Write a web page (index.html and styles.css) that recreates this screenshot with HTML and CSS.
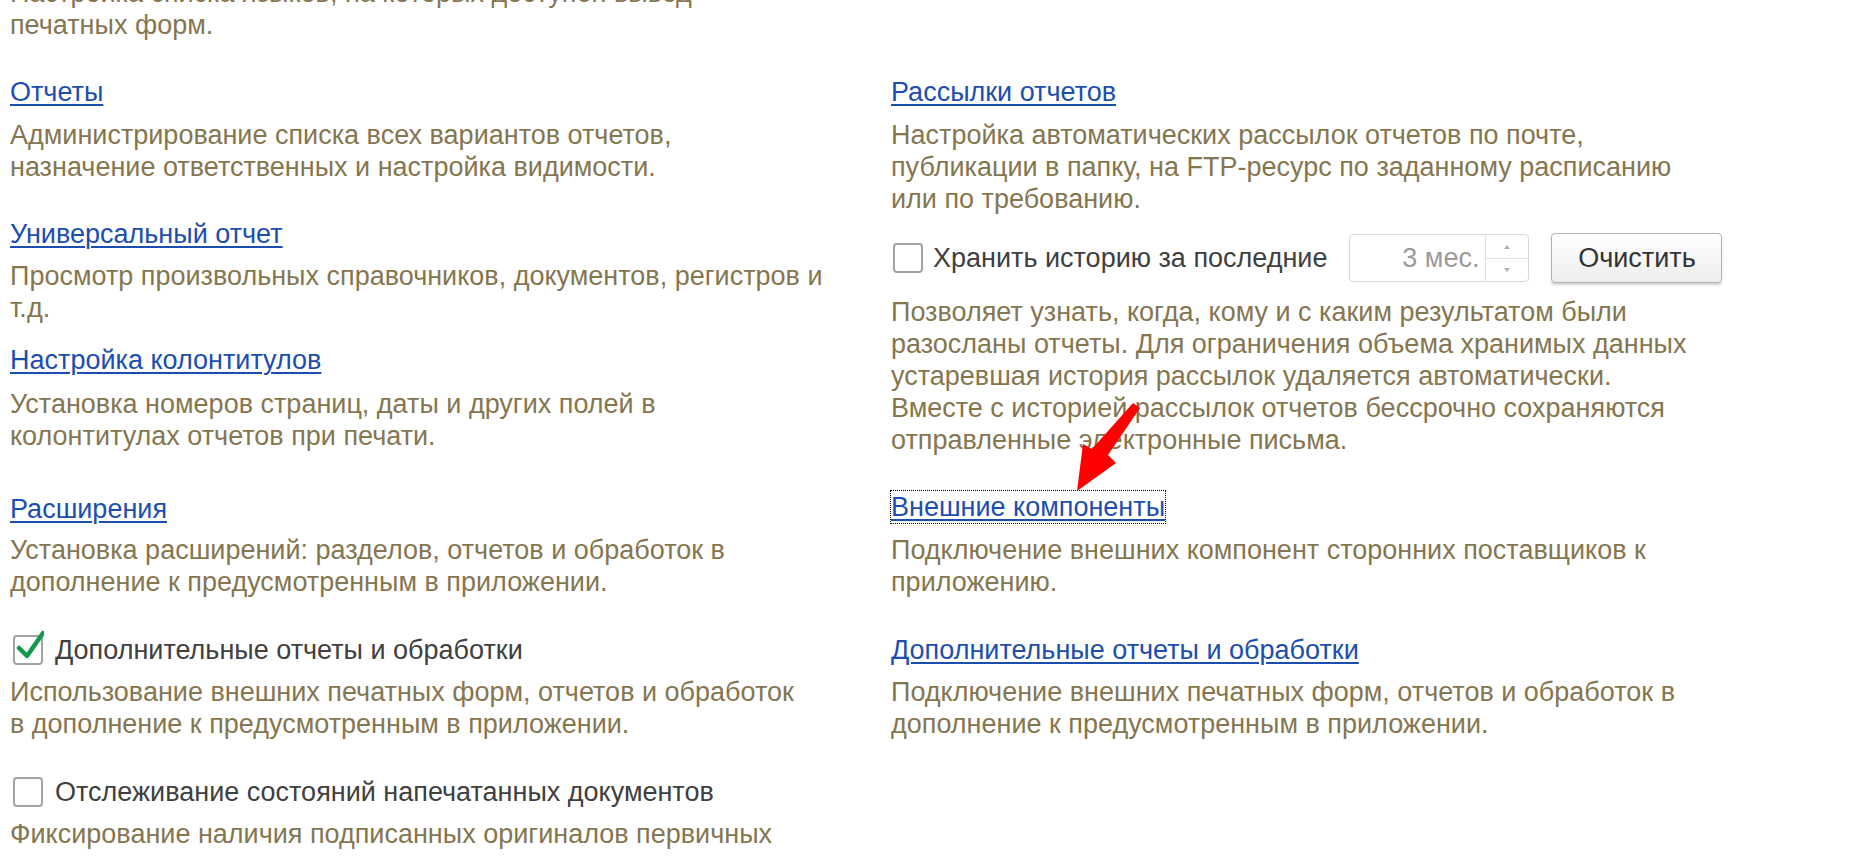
FILE: index.html
```html
<!DOCTYPE html>
<html>
<head>
    <meta charset="utf-8">
    <title>Отчеты и обработки</title>
    <link rel="stylesheet" href="styles.css">
</head>
<body>
<div class="page">
    <div class="col col-left">
        <p class="note lead">Настройка списка языков, на которых доступен вывод<br>печатных форм.</p>

        <div class="item item-reports">
            <a href="#" class="link">Отчеты</a>
            <p class="note">Администрирование списка всех вариантов отчетов,<br>назначение ответственных и настройка видимости.</p>
        </div>

        <div class="item item-universal">
            <a href="#" class="link">Универсальный отчет</a>
            <p class="note">Просмотр произвольных справочников, документов, регистров и<br>т.д.</p>
        </div>

        <div class="item item-footer">
            <a href="#" class="link">Настройка колонтитулов</a>
            <p class="note">Установка номеров страниц, даты и других полей в<br>колонтитулах отчетов при печати.</p>
        </div>

        <div class="item item-ext">
            <a href="#" class="link">Расширения</a>
            <p class="note">Установка расширений: разделов, отчетов и обработок в<br>дополнение к предусмотренным в приложении.</p>
        </div>

        <div class="item item-check">
            <label class="check">
                <span class="box checked">
                    <svg width="30" height="36" viewBox="0 0 30 36"><path d="M5 22 L13 30 L29 7" fill="none" stroke="#12994a" stroke-width="4.5" stroke-linecap="round" stroke-linejoin="round"/></svg>
                </span>
                <span class="check-text">Дополнительные отчеты и обработки</span>
            </label>
            <p class="note">Использование внешних печатных форм, отчетов и обработок<br>в дополнение к предусмотренным в приложении.</p>
        </div>

        <div class="item item-check">
            <label class="check">
                <span class="box"></span>
                <span class="check-text">Отслеживание состояний напечатанных документов</span>
            </label>
            <p class="note">Фиксирование наличия подписанных оригиналов первичных</p>
        </div>
    </div>

    <div class="col col-right">
        <div class="item item-reports">
            <a href="#" class="link">Рассылки отчетов</a>
            <p class="note">Настройка автоматических рассылок отчетов по почте,<br>публикации в папку, на FTP-ресурс по заданному расписанию<br>или по требованию.</p>
        </div>

        <div class="history">
            <label class="check">
                <span class="box"></span>
                <span class="check-text">Хранить историю за последние</span>
            </label>
            <div class="spin">
                <span class="spin-value">3 мес.</span>
                <span class="spin-btns">
                    <span class="spin-up"></span>
                    <span class="spin-down"></span>
                </span>
            </div>
            <button class="btn">Очистить</button>
        </div>
        <p class="note history-note">Позволяет узнать, когда, кому и с каким результатом были<br>разосланы отчеты. Для ограничения объема хранимых данных<br>устаревшая история рассылок удаляется автоматически.<br>Вместе с историей рассылок отчетов бессрочно сохраняются<br>отправленные электронные письма.</p>

        <div class="item item-ext">
            <a href="#" class="link focused">Внешние компоненты</a>
            <p class="note">Подключение внешних компонент сторонних поставщиков к<br>приложению.</p>
        </div>

        <div class="item item-check">
            <a href="#" class="link">Дополнительные отчеты и обработки</a>
            <p class="note">Подключение внешних печатных форм, отчетов и обработок в<br>дополнение к предусмотренным в приложении.</p>
        </div>
    </div>

    <!-- red pointer drawn over the form -->
    <svg class="arrow" width="90" height="110" viewBox="0 0 90 110">
        <path d="M67 4 L74 9 L42 56 L50 64 L11 92 L17 45 L26 50 Z" fill="#ff0000"/>
    </svg>
</div>
</body>
</html>
```

FILE: styles.css
```css
body {
    margin: 0;
    background: #fff;
    font-family: "Liberation Sans", Arial, sans-serif;
    font-size: 27px;
    line-height: 32px;
    color: #404040;
    overflow: hidden;
}

.page {
    position: relative;
    display: grid;
    grid-template-columns: 891px 1fr;
    height: 856px;
    overflow: hidden;
}

.col-left {
    padding-left: 10px;
}

p {
    margin: 0;
}

.note {
    color: #857650;
}

.lead {
    margin-top: -23px;
}

.link {
    color: #1c4eb0;
    text-decoration: underline;
    text-decoration-thickness: 2px;
    text-underline-offset: 3px;
}

.item .link {
    display: inline-block;
}

.item .note {
    margin-top: 11px;
}

.item-reports {
    margin-top: 35px;
}

.col-right .item-reports {
    margin-top: 76px;
}

.item-universal {
    margin-top: 35px;
}

.item-universal .note {
    margin-top: 10px;
}

.item-footer {
    margin-top: 20px;
}

.item-footer .note {
    margin-top: 12px;
}

.item-ext {
    margin-top: 41px;
}

.col-right .item-ext {
    margin-top: 35px;
}

.item-ext .note {
    margin-top: 9px;
}

.item-check {
    margin-top: 36px;
}

.item-check .note {
    margin-top: 10px;
}

.col-right .item-ext .note {
    margin-top: 11px;
}

/* checkbox */
.check {
    display: flex;
    align-items: center;
    gap: 12px;
    padding-left: 3px;
}

.box {
    position: relative;
    flex: none;
    width: 26px;
    height: 26px;
    border: 2px solid #a3a3a3;
    border-radius: 4px;
    background: #fff;
}

.box svg {
    position: absolute;
    left: -1px;
    top: -11px;
}

/* history row */
.history {
    display: flex;
    align-items: center;
    margin-top: 18px;
    height: 50px;
}

.history .check {
    padding-left: 2px;
    gap: 10px;
}

.spin {
    display: flex;
    margin-left: 22px;
    width: 178px;
    height: 46px;
    border: 1px solid #d9d9d9;
    border-radius: 4px;
}

.spin-value {
    flex: 1;
    text-align: right;
    padding-right: 6px;
    line-height: 46px;
    color: #9a9a9a;
}

.spin-btns {
    display: flex;
    flex-direction: column;
    width: 42px;
    border-left: 1px solid #e0e0e0;
}

.spin-up, .spin-down {
    flex: 1;
    position: relative;
}

.spin-up {
    border-bottom: 1px solid #e0e0e0;
}

.spin-up:after, .spin-down:after {
    content: "";
    position: absolute;
    left: 18px;
    top: 10px;
    border-left: 3px solid transparent;
    border-right: 3px solid transparent;
}

.spin-up:after {
    border-bottom: 4px solid #b0b0b0;
}

.spin-down:after {
    top: 9px;
    border-top: 4px solid #b0b0b0;
}

.btn {
    margin-left: 22px;
    width: 171px;
    height: 50px;
    border: 1px solid #b3b3b3;
    border-radius: 4px;
    background: linear-gradient(#ffffff, #ededed);
    box-shadow: 0 2px 2px rgba(0, 0, 0, .18);
    font-family: "Liberation Sans", Arial, sans-serif;
    font-size: 27px;
    color: #333;
    padding: 0;
}

.history-note {
    margin-top: 13px;
}

.focused {
    outline: 1px dotted #000;
    outline-offset: 0;
}

.arrow {
    position: absolute;
    left: 1066px;
    top: 399px;
}
```
